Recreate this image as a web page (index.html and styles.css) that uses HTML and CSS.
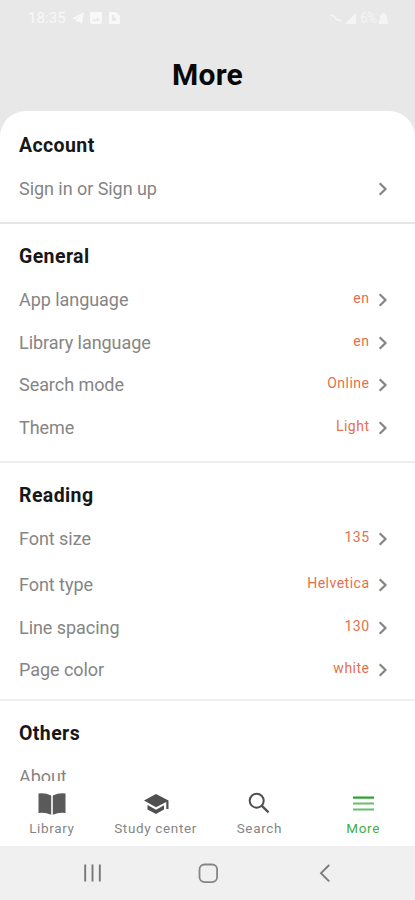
FILE: index.html
```html
<!DOCTYPE html>
<html lang="en">
<head>
<meta charset="utf-8">
<title>More</title>
<link rel="stylesheet" href="styles.css">
</head>
<body>
<svg class="defs" aria-hidden="true">
  <symbol id="chev" viewBox="0 0 10 16"><path d="M1.7 2.2 7.5 8l-5.8 5.8" fill="none" stroke="#858585" stroke-width="2.2"/></symbol>
</svg>
<div class="screen">
  <header class="top">
    <div class="status">
      <div class="status-left">
        <span class="time">18:35</span>
        <svg width="12" height="12" viewBox="0 0 12 12"><path d="M0 6.500 12 0 9.800 12 6 9 4.500 11 4 8 9 3.500 2.800 7.500z" fill="currentColor"/></svg>
        <svg width="12" height="12" viewBox="0 0 12 12"><path fill-rule="evenodd" d="M2 0h8q2 0 2 2v8q0 2-2 2H2q-2 0-2-2V2q0-2 2-2zM2 9h8L7.500 5.500 5.500 8 4 6.500z" fill="currentColor"/></svg>
        <svg class="doc" width="11" height="12" viewBox="0 0 11 12"><path fill-rule="evenodd" d="M1 0h6l4 4v7q0 1-1 1H1q-1 0-1-1V1q0-1 1-1zM3 3v6h4V5.500H5V3z" fill="currentColor"/></svg>
      </div>
      <div class="status-right">
        <svg width="13" height="10" viewBox="0 0 13 10"><path d="M1 2q5 .5 6 4 2 2 5 1" stroke="currentColor" stroke-width="2" fill="none"/></svg>
        <svg width="12" height="12" viewBox="0 0 12 12"><path d="M0 12 11 1v11z" fill="currentColor"/></svg>
        <span class="battery">6%</span>
        <svg width="9" height="12" viewBox="0 0 9 12"><path d="M3 1h3v2h2v5h1v4H0V8h1V3h2z" fill="currentColor"/></svg>
      </div>
    </div>
    <h1>More</h1>
  </header>
  <main class="sheet">
    <section class="account">
      <h2>Account</h2>
      <div class="row"><span class="label">Sign in or Sign up</span><svg class="chev"><use href="#chev"/></svg></div>
    </section>
    <section class="general">
      <h2>General</h2>
      <div class="row"><span class="label">App language</span><span class="value">en</span><svg class="chev"><use href="#chev"/></svg></div>
      <div class="row"><span class="label">Library language</span><span class="value">en</span><svg class="chev"><use href="#chev"/></svg></div>
      <div class="row"><span class="label">Search mode</span><span class="value">Online</span><svg class="chev"><use href="#chev"/></svg></div>
      <div class="row"><span class="label">Theme</span><span class="value">Light</span><svg class="chev"><use href="#chev"/></svg></div>
    </section>
    <section class="reading">
      <h2>Reading</h2>
      <div class="row size"><span class="label">Font size</span><span class="value">135</span><svg class="chev"><use href="#chev"/></svg></div>
      <div class="row"><span class="label">Font type</span><span class="value">Helvetica</span><svg class="chev"><use href="#chev"/></svg></div>
      <div class="row"><span class="label">Line spacing</span><span class="value">130</span><svg class="chev"><use href="#chev"/></svg></div>
      <div class="row"><span class="label">Page color</span><span class="value">white</span><svg class="chev"><use href="#chev"/></svg></div>
    </section>
    <section class="others">
      <h2>Others</h2>
      <div class="row"><span class="label">About</span></div>
    </section>
  </main>
  <nav class="tabs">
    <div class="tab">
      <svg width="30" height="24" viewBox="0 0 30 24"><path d="M1.500 1.500Q8 .5 14.200 3.500v19.200Q8 20 1.500 21zM28.500 1.500Q22 .5 15.800 3.500v19.200Q22 20 28.500 21z" fill="#5a5a5a"/></svg>
      <span>Library</span>
    </div>
    <div class="tab">
      <svg width="28" height="24" viewBox="0 0 28 24"><path d="M2 8.500 14 2l12.500 6.500V17h-2.200v-7L14 15.300zM5.500 13l8.500 4.800 8-4.600v4.300l-8 4.500-8.500-4.500z" fill="#505050"/></svg>
      <span>Study center</span>
    </div>
    <div class="tab">
      <svg width="24" height="24" viewBox="0 0 24 24"><circle cx="9.700" cy="8.700" r="7" fill="none" stroke="#505050" stroke-width="2"/><path d="m14.700 13.700 6.800 6.600" stroke="#505050" stroke-width="2.300"/></svg>
      <span>Search</span>
    </div>
    <div class="tab active">
      <svg width="24" height="24" viewBox="0 0 24 24"><path d="M2 5.600h21" stroke="#26a22b" stroke-width="2.200"/><path d="M2 11.500h21M2 17.500h21" stroke="#68bd6b" stroke-width="2.200"/></svg>
      <span>More</span>
    </div>
  </nav>
  <div class="system">
    <svg width="20" height="20" viewBox="0 0 20 20"><path d="M3.200 1.500v17M10.500 1.500v17M17.800 1.500v17" stroke="#777" stroke-width="1.900"/></svg>
    <svg width="20" height="20" viewBox="0 0 20 20"><rect x="1.500" y="1.500" width="17.600" height="17.600" rx="5" fill="none" stroke="#858585" stroke-width="1.800"/></svg>
    <svg width="20" height="20" viewBox="0 0 20 20"><path d="M15.200 2 7 10.200l8.200 8.200" fill="none" stroke="#7b7b7b" stroke-width="1.900"/></svg>
  </div>
</div>
</body>
</html>
```
FILE: styles.css
```css
* { box-sizing: border-box; }
body {
  margin: 0;
  background: #e8e8e8;
  font-family: Roboto, "Liberation Sans", sans-serif;
}
.defs { display: none; }
svg { flex: none; display: block; }
.screen {
  width: 415px;
  height: 900px;
  display: flex;
  flex-direction: column;
  overflow: hidden;
}
.top { height: 111px; flex: none; }
.status {
  height: 36px;
  padding: 0 27px 0 28px;
  display: flex;
  justify-content: space-between;
  align-items: center;
  color: #f8f8f8;
}
.status-left, .status-right { display: flex; align-items: center; }
.status-left { gap: 6px; }
.status-right { gap: 3px; color: #f4f4f4; }
.doc { margin-left: 1px; }
.time { font-size: 15px; letter-spacing: 0.1px; }
.battery { font-size: 14px; letter-spacing: -1px; }
h1 {
  margin: 0;
  height: 76px;
  line-height: 77px;
  text-align: center;
  font-size: 30px;
  font-weight: 700;
  letter-spacing: 0.2px;
  color: #080808;
}
.sheet {
  flex: none;
  height: 670px;
  background: #fff;
  border-radius: 26px 26px 0 0;
  overflow: hidden;
}
section { padding-left: 19px; border-bottom: 2px solid #e6e6e6; }
.account { height: 113px; padding-top: 12px; }
.general { height: 239px; padding-top: 10px; border-color: #ececec; }
.reading { height: 238px; padding-top: 10px; border-color: #f0f0f0; }
.others { padding-top: 10px; border: 0; }
h2 {
  margin: 0;
  height: 44px;
  line-height: 46px;
  font-size: 19.500px;
  font-weight: 700;
  letter-spacing: 0.4px;
  color: #171717;
}
.row {
  height: 42.700px;
  padding-right: 27px;
  display: flex;
  align-items: center;
}
.size { margin-bottom: 3.500px; }
.label { flex: 1; font-size: 18px; letter-spacing: -0.05px; color: #858585; white-space: nowrap; }
.value { font-size: 14px; letter-spacing: 0.500px; color: #e4704c; margin-right: 8.500px; padding-bottom: 3px; }
.chev { width: 10px; height: 16px; margin-top: 1px; }
.tabs {
  flex: none;
  height: 65px;
  padding-top: 11px;
  display: grid;
  grid-template-columns: repeat(4, 1fr);
  background: #fff;
}
.tab {
  display: flex;
  flex-direction: column;
  align-items: center;
  font-size: 13.500px;
  line-height: 16px;
  letter-spacing: 0.650px;
  gap: 4px;
  color: #858585;
}
.active { color: #43ad48; }
.system {
  flex: 1;
  display: flex;
  align-items: center;
  justify-content: center;
  gap: 96px;
  background: #f0f0f0;
}
```
